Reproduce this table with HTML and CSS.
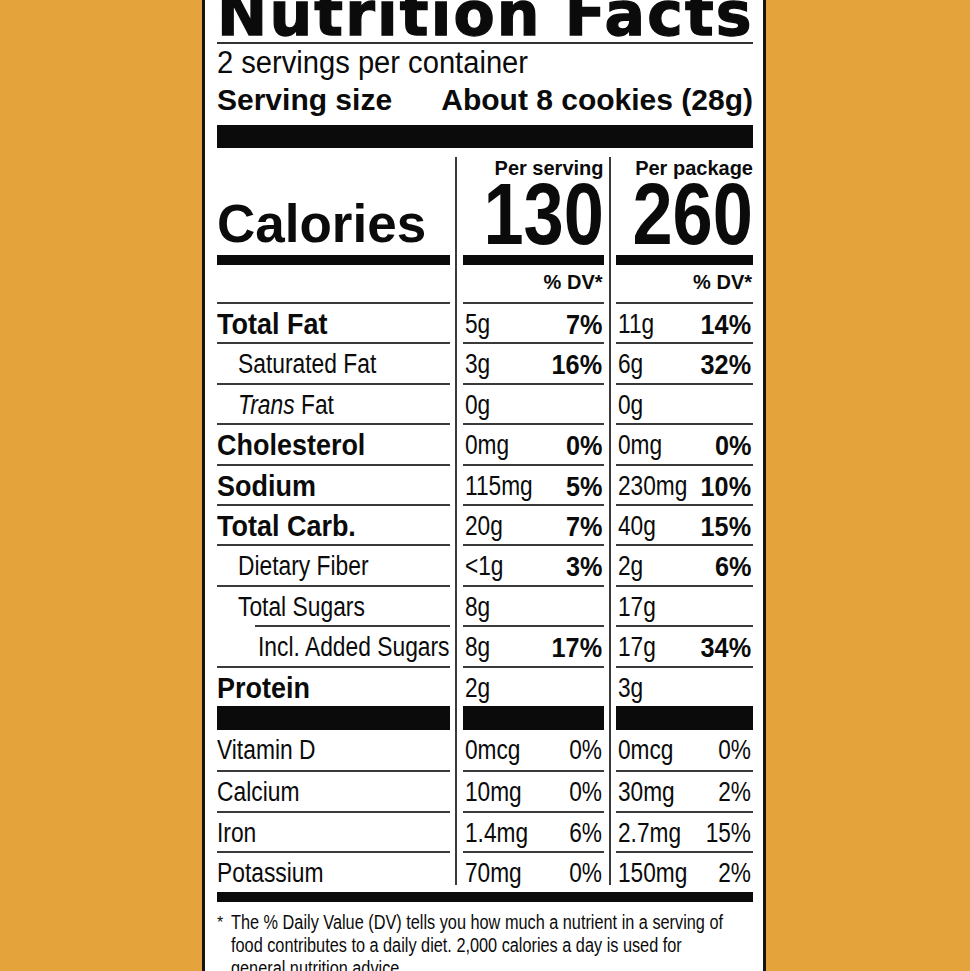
FILE: index.html
```html
<!DOCTYPE html>
<html lang="en">
<head>
<meta charset="utf-8">
<title>Nutrition Facts</title>
<link rel="stylesheet" href="styles.css">
</head>
<body>
<div class="label">
  <h1 class="title">Nutrition Facts</h1>
  <div class="servings"><span class="sv">2 servings per container</span></div>
  <div class="serving-size"><span>Serving size</span><span>About 8 cookies (28g)</span></div>
  <div class="bar-thick"></div>

  <div class="table">
    <div class="row head">
      <div class="cell cal"><span class="cal-word">Calories</span></div>
      <div class="cell cal num"><span class="per">Per serving</span><span class="big">130</span></div>
      <div class="cell cal num"><span class="per">Per package</span><span class="big">260</span></div>
    </div>
    <div class="row dv-head">
      <div class="cell"></div>
      <div class="cell dv">% DV*</div>
      <div class="cell dv">% DV*</div>
    </div>

    <div class="row nrow">
      <div class="cell name b"><span class="t">Total Fat</span></div>
      <div class="cell val c2"><span class="v">5g</span><b class="p">7%</b></div>
      <div class="cell val c3"><span class="v">11g</span><b class="p">14%</b></div>
    </div>
    <div class="row nrow">
      <div class="cell name in1"><span class="t">Saturated Fat</span></div>
      <div class="cell val c2"><span class="v">3g</span><b class="p">16%</b></div>
      <div class="cell val c3"><span class="v">6g</span><b class="p">32%</b></div>
    </div>
    <div class="row nrow">
      <div class="cell name in1"><span class="t"><i>Trans</i> Fat</span></div>
      <div class="cell val c2"><span class="v">0g</span></div>
      <div class="cell val c3"><span class="v">0g</span></div>
    </div>
    <div class="row nrow">
      <div class="cell name b"><span class="t">Cholesterol</span></div>
      <div class="cell val c2"><span class="v">0mg</span><b class="p">0%</b></div>
      <div class="cell val c3"><span class="v">0mg</span><b class="p">0%</b></div>
    </div>
    <div class="row nrow">
      <div class="cell name b"><span class="t">Sodium</span></div>
      <div class="cell val c2"><span class="v">115mg</span><b class="p">5%</b></div>
      <div class="cell val c3"><span class="v">230mg</span><b class="p">10%</b></div>
    </div>
    <div class="row nrow">
      <div class="cell name b"><span class="t">Total Carb.</span></div>
      <div class="cell val c2"><span class="v">20g</span><b class="p">7%</b></div>
      <div class="cell val c3"><span class="v">40g</span><b class="p">15%</b></div>
    </div>
    <div class="row nrow">
      <div class="cell name in1"><span class="t">Dietary Fiber</span></div>
      <div class="cell val c2"><span class="v">&lt;1g</span><b class="p">3%</b></div>
      <div class="cell val c3"><span class="v">2g</span><b class="p">6%</b></div>
    </div>
    <div class="row nrow">
      <div class="cell name in1"><span class="t">Total Sugars</span></div>
      <div class="cell val c2"><span class="v">8g</span></div>
      <div class="cell val c3"><span class="v">17g</span></div>
    </div>
    <div class="row nrow">
      <div class="cell name in2"><span class="t">Incl. Added Sugars</span></div>
      <div class="cell val c2"><span class="v">8g</span><b class="p">17%</b></div>
      <div class="cell val c3"><span class="v">17g</span><b class="p">34%</b></div>
    </div>
    <div class="row nrow">
      <div class="cell name b"><span class="t">Protein</span></div>
      <div class="cell val c2"><span class="v">2g</span></div>
      <div class="cell val c3"><span class="v">3g</span></div>
    </div>

    <div class="row barrow">
      <div class="cell"></div>
      <div class="cell"></div>
      <div class="cell"></div>
    </div>

    <div class="row nrow first">
      <div class="cell name"><span class="t">Vitamin D</span></div>
      <div class="cell val c2"><span class="v">0mcg</span><span class="p reg">0%</span></div>
      <div class="cell val c3"><span class="v">0mcg</span><span class="p reg">0%</span></div>
    </div>
    <div class="row nrow">
      <div class="cell name"><span class="t">Calcium</span></div>
      <div class="cell val c2"><span class="v">10mg</span><span class="p reg">0%</span></div>
      <div class="cell val c3"><span class="v">30mg</span><span class="p reg">2%</span></div>
    </div>
    <div class="row nrow">
      <div class="cell name"><span class="t">Iron</span></div>
      <div class="cell val c2"><span class="v">1.4mg</span><span class="p reg">6%</span></div>
      <div class="cell val c3"><span class="v">2.7mg</span><span class="p reg">15%</span></div>
    </div>
    <div class="row nrow last">
      <div class="cell name"><span class="t">Potassium</span></div>
      <div class="cell val c2"><span class="v">70mg</span><span class="p reg">0%</span></div>
      <div class="cell val c3"><span class="v">150mg</span><span class="p reg">2%</span></div>
    </div>
  </div>

  <div class="bar-bottom"></div>

  <div class="foot">
    <span class="star">*</span>
    <p>The % Daily Value (DV) tells you how much a nutrient in a serving of<br>food contributes to a daily diet. 2,000 calories a day is used for<br>general nutrition advice.</p>
  </div>
</div>
</body>
</html>
```

FILE: styles.css
```css
* { box-sizing: border-box; }

html, body {
  margin: 0;
  padding: 0;
}

body {
  background: #e5a33b;
  color: #0b0b0b;
  font-family: "Liberation Sans", Arial, sans-serif;
}

.label {
  margin-left: 202px;
  width: 564px;
  background: #fff;
  border-left: 3px solid #141414;
  border-right: 3px solid #141414;
  padding: 0 10px 60px 12px;
}

.title {
  margin: -11.5px 0 0;
  padding-bottom: 3.5px;
  border-bottom: 2px solid #333;
  font-family: "DejaVu Sans", sans-serif;
  font-weight: 700;
  font-size: 60px;
  line-height: 50px;
  letter-spacing: 2.2px;
  -webkit-text-stroke: 1.3px #0b0b0b;
  white-space: nowrap;
}

/* condensed text helpers */
.sv, .t, .v, .p, .big, .foot p {
  display: inline-block;
  white-space: nowrap;
}

.servings {
  margin-top: 1.6px;
  font-size: 31px;
  line-height: 34px;
}

.sv {
  transform: scaleX(.94);
  transform-origin: 0 50%;
}

.serving-size {
  margin-top: 3px;
  display: flex;
  justify-content: space-between;
  font-weight: 700;
  font-size: 30px;
  line-height: 34px;
}

.bar-thick {
  margin-top: 8.4px;
  height: 23px;
  background: #0b0b0b;
}

/* ---------- table ---------- */
.table {
  margin-top: 9px;
  background:
    linear-gradient(#3a3a3a, #3a3a3a) 238.25px 0 / 2px 100% no-repeat,
    linear-gradient(#3a3a3a, #3a3a3a) 391.75px 0 / 2px 100% no-repeat;
}

.row {
  display: grid;
  grid-template-columns: 233px 141px 137px;
  column-gap: 12.5px;
}

.head {
  height: 108px;
}

.cal {
  display: flex;
  flex-direction: column;
  justify-content: flex-end;
  border-bottom: 10px solid #0b0b0b;
  padding-bottom: 5px;
}

.cal-word {
  font-weight: 700;
  font-size: 53px;
  line-height: 53px;
}

.num {
  align-items: flex-end;
  padding-bottom: 5.5px;
}

.per {
  font-weight: 700;
  font-size: 20px;
  line-height: 20px;
  margin-bottom: 1.5px;
}

.big {
  font-weight: 700;
  font-size: 88px;
  line-height: 70px;
  transform: scaleX(.82);
  transform-origin: 100% 50%;
}

.dv-head {
  height: 37px;
}

.dv {
  padding-top: 7px;
  padding-right: 1px;
  text-align: right;
  font-weight: 700;
  font-size: 20px;
  line-height: 20px;
}

.nrow {
  height: 40.4px;
}

.nrow .cell {
  border-top: 2px solid #3a3a3a;
  padding-top: 7px;
  font-size: 27px;
  line-height: 27px;
  white-space: nowrap;
}

.t {
  transform: scaleX(.845);
  transform-origin: 0 50%;
}

.nrow .name.b {
  font-weight: 700;
  font-size: 29px;
}

.nrow .name.b .t {
  transform: scaleX(.93);
}

.nrow .in1 { padding-left: 21px; }
.nrow .in2 { margin-left: 38px; padding-left: 3px; }

.val {
  display: flex;
  justify-content: space-between;
}

.val.c2 { padding-left: 2.5px; padding-right: 1px; }
.val.c3 { padding-left: 1.5px; padding-right: 1.5px; }

.v {
  width: 0;
  transform: scaleX(.84);
  transform-origin: 0 50%;
}

.p {
  margin-left: auto;
  font-weight: 700;
  font-size: 28px;
  transform: scaleX(.9);
  transform-origin: 100% 50%;
}

.p.reg {
  font-weight: 400;
  font-size: 27px;
  transform: scaleX(.84);
}

.barrow {
  height: 24px;
}

.barrow .cell {
  background: #0b0b0b;
}

.nrow.first .cell {
  border-top: 0;
  padding-top: 7px;
}

.nrow.last {
  height: 34px;
}

.bar-bottom {
  margin-top: 7px;
  height: 10px;
  background: #0b0b0b;
}

.foot {
  margin-top: 9px;
  display: flex;
  font-size: 19.5px;
  line-height: 23px;
}

.star {
  flex: 0 0 14px;
  font-size: 16px;
  line-height: 16px;
  padding-top: 4px;
}

.foot p {
  margin: 0;
  transform: scaleX(.835);
  transform-origin: 0 0;
}
```
